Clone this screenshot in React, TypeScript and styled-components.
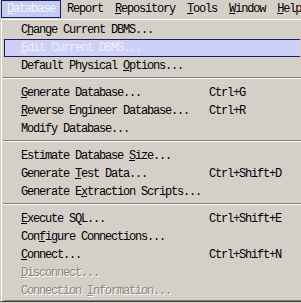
import React from "react";
import styled, { createGlobalStyle } from "styled-components";

const Global = createGlobalStyle`
  html, body { margin: 0; padding: 0; background: #d4d0c8; }
  body { width: 301px; height: 303px; overflow: hidden; }
`;

const Screen = styled.div`
  width: 301px;
  height: 303px;
  overflow: hidden;
  background: #d4d0c8;
  font-family: "Liberation Mono", "DejaVu Sans Mono", monospace;
  font-size: 12px;
  letter-spacing: -1.2px;
  color: #000;
`;

const MenuBar = styled.div`
  display: flex;
  height: 18px;
  padding-left: 1px;
  white-space: nowrap;
`;

const BarItem = styled.div<{ $active?: boolean }>`
  box-sizing: border-box;
  flex: none;
  height: 18px;
  padding: ${(p) => (p.$active ? "0 5px" : "1px 6px 0")};
  line-height: 16px;
  border: ${(p) => (p.$active ? "1px solid #14205a" : "none")};
  background: ${(p) => (p.$active ? "#c6cbf4" : "transparent")};
  color: ${(p) => (p.$active ? "#f4f4ff" : "#000")};
`;

const U = styled.span`
  text-decoration: underline;
  text-underline-offset: 1px;
`;

const Popup = styled.div`
  box-sizing: border-box;
  width: 305px;
  border-top: 1px solid #d4d0c8;
  border-left: 1px solid #d4d0c8;
  box-shadow: inset 1px 1px 0 #ffffff;
  padding: 2px 0 0 3px;
  border-bottom: 1px solid #404040;
`;

const Inner = styled.div`
  border-bottom: 1px solid #808080;
`;

const Item = styled.div<{ $selected?: boolean; $disabled?: boolean }>`
  box-sizing: border-box;
  display: grid;
  grid-template-columns: 188px 1fr;
  height: 18px;
  line-height: 16px;
  padding-left: 16px;
  white-space: nowrap;
  border: 1px solid ${(p) => (p.$selected ? "#14205a" : "transparent")};
  border-right: none;
  background: ${(p) => (p.$selected ? "#cfd0f7" : "transparent")};
  color: ${(p) => (p.$selected ? "#eeeeff" : p.$disabled ? "#8a8780" : "#000")};
  text-shadow: ${(p) => (p.$disabled ? "1px 1px 0 #ffffff" : "none")};
  width: 296px;
`;

const Separator = styled.div`
  height: 9px;
  box-sizing: border-box;
  padding-top: 2px;
  margin-left: -1px;
  width: 300px;
  &::before {
    content: "";
    display: block;
    border-top: 1px solid #808080;
    border-bottom: 1px solid #ffffff;
  }
`;

type Entry =
  | { sep: true }
  | {
      label: React.ReactNode;
      shortcut?: string;
      selected?: boolean;
      disabled?: boolean;
    };

const entries: Entry[] = [
  { label: <>C<U>h</U>ange Current DBMS...</> },
  { label: <><U>E</U>dit Current DBMS...</>, selected: true },
  { label: <>Default Physical <U>O</U>ptions...</> },
  { sep: true },
  { label: <><U>G</U>enerate Database...</>, shortcut: "Ctrl+G" },
  { label: <><U>R</U>everse Engineer Database...</>, shortcut: "Ctrl+R" },
  { label: <>Modify Database...</> },
  { sep: true },
  { label: <>Estimate Database <U>S</U>ize...</> },
  { label: <>Generate <U>T</U>est Data...</>, shortcut: "Ctrl+Shift+D" },
  { label: <>Generate E<U>x</U>traction Scripts...</> },
  { sep: true },
  { label: <><U>E</U>xecute SQL...</>, shortcut: "Ctrl+Shift+E" },
  { label: <>Con<U>f</U>igure Connections...</> },
  { label: <><U>C</U>onnect...</>, shortcut: "Ctrl+Shift+N" },
  { label: <><U>D</U>isconnect...</>, disabled: true },
  { label: <>Connection <U>I</U>nformation...</>, disabled: true },
];

export default function App() {
  return (
    <Screen>
      <Global />
      <MenuBar>
        <BarItem $active><U>D</U>atabase</BarItem>
        <BarItem>Report</BarItem>
        <BarItem><U>R</U>epository</BarItem>
        <BarItem><U>T</U>ools</BarItem>
        <BarItem><U>W</U>indow</BarItem>
        <BarItem><U>H</U>elp</BarItem>
      </MenuBar>
      <Popup>
        <Inner>
          {entries.map((e, i) =>
            "sep" in e ? (
              <Separator key={i} />
            ) : (
              <Item key={i} $selected={e.selected} $disabled={e.disabled}>
                <span>{e.label}</span>
                <span>{e.shortcut ?? ""}</span>
              </Item>
            )
          )}
        </Inner>
      </Popup>
    </Screen>
  );
}
